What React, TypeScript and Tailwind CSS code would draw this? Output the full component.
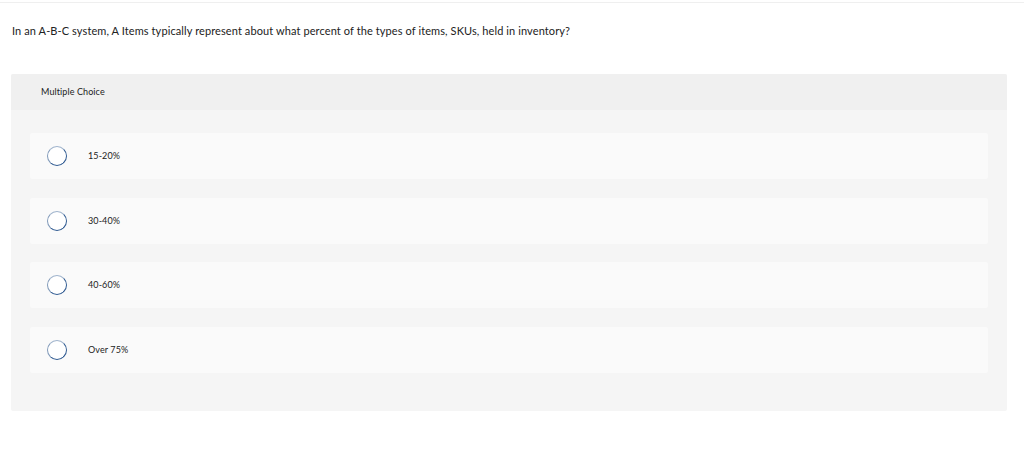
import React from 'react';

const options = ['15-20%', '30-40%', '40-60%', 'Over 75%'];

const Radio = () => (
  <span className="block h-5 w-5 shrink-0 rounded-full border border-[#2f5a91] bg-white [border-top-color:#9fb3cc] [border-left-color:#7f98b8]" />
);

const App = () => {
  return (
    <div className="min-h-[458px] bg-white text-[#222]" style={{ fontFamily: 'Lato, "Open Sans", sans-serif' }}>
      <div className="h-[2px]" />
      <div className="h-px bg-[#efefef]" />
      <div className="px-[11px]">
        <p className="pl-px pt-[21px] text-[11px] leading-[14px] tracking-[0.1px]">
          In an A-B-C system, A Items typically represent about what percent of the types of items, SKUs, held in inventory?
        </p>

        <div className="mt-[36px] w-[996px] overflow-hidden rounded-[2px] bg-[#f5f5f5]">
          <div className="flex h-[36px] items-center bg-[#f0f0f0] pl-[30px] text-[9px] tracking-[0.1px]">
            Multiple Choice
          </div>
          <div className="flex flex-col gap-[18.5px] px-[19px] pb-[38.5px] pt-[23px]">
            {options.map((opt) => (
              <div key={opt} className="flex h-[46px] items-center rounded-[2px] bg-[#fafafa] pl-[17px]">
                <Radio />
                <span className="ml-[21px] text-[9px] tracking-[0.1px]">{opt}</span>
              </div>
            ))}
          </div>
        </div>
      </div>
    </div>
  );
};

export default App;
